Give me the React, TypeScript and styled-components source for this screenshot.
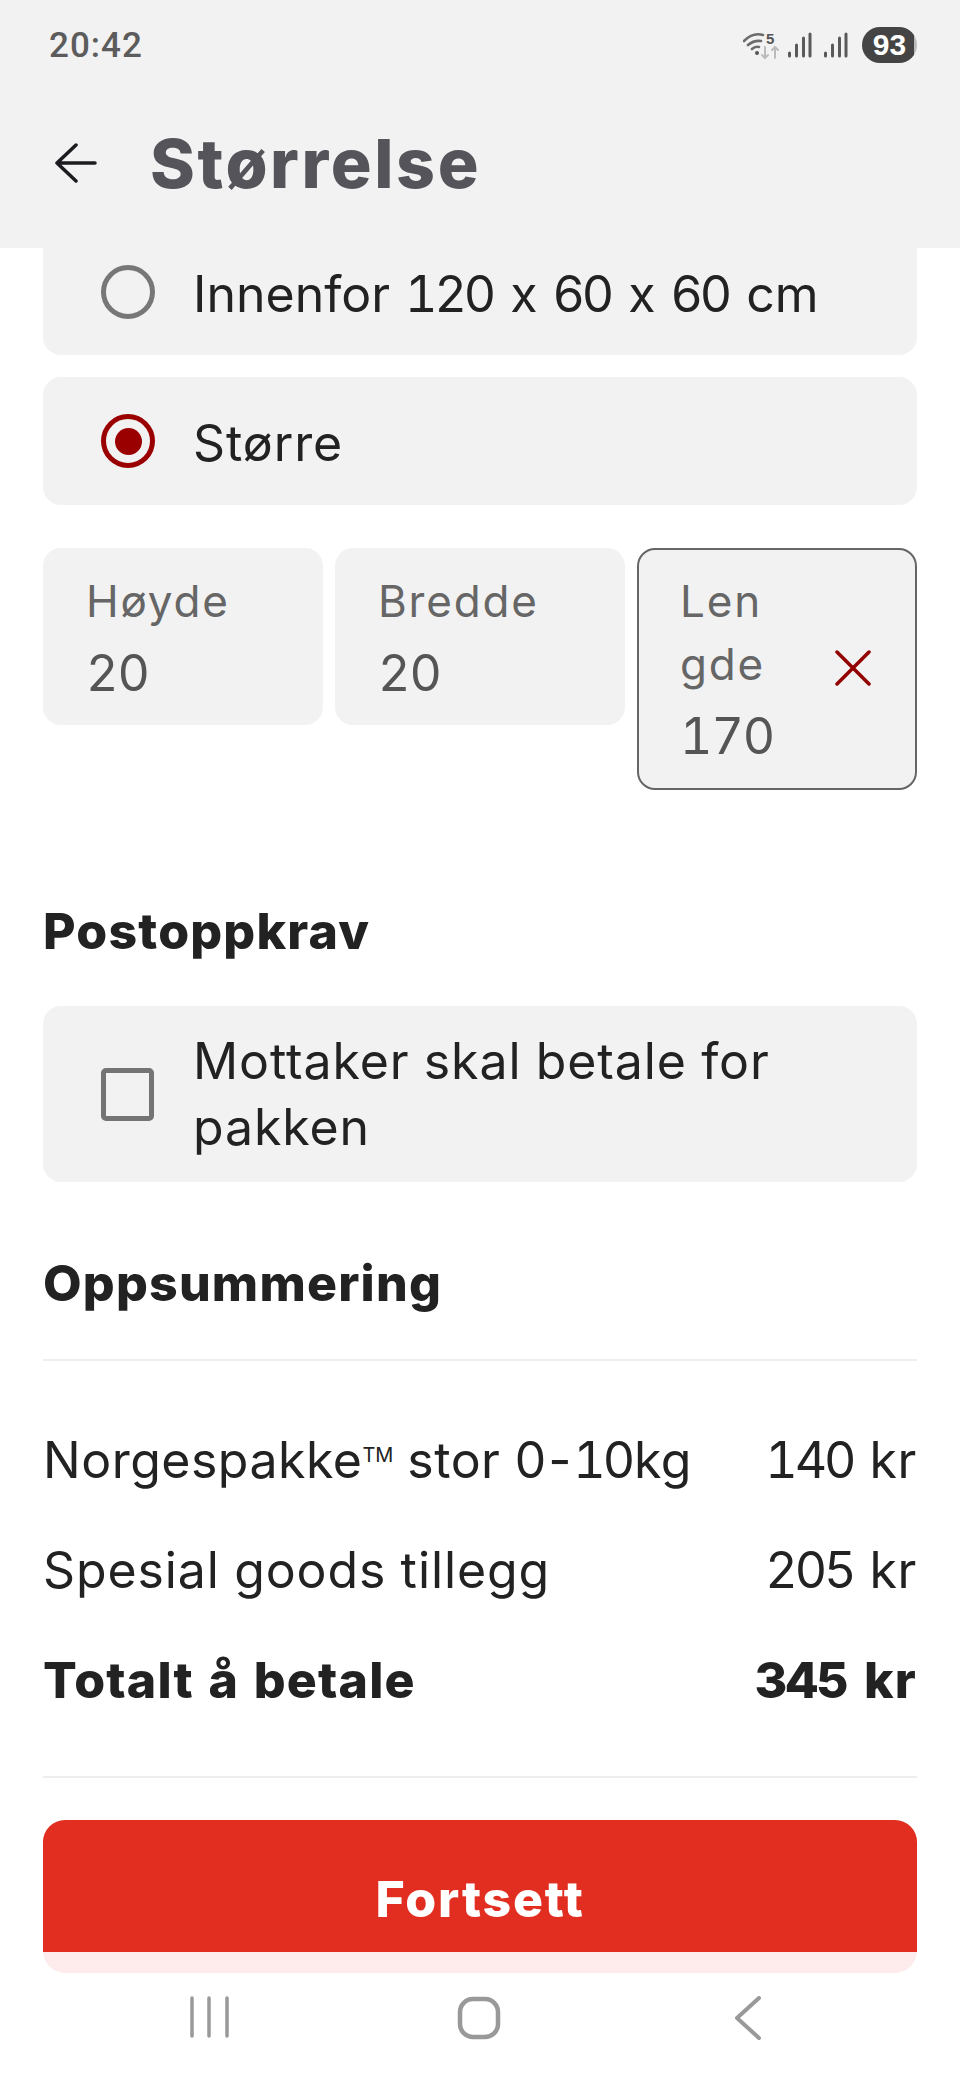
import React from 'react';
import styled, { createGlobalStyle } from 'styled-components';

const GlobalStyle = createGlobalStyle`
  html, body { margin: 0; padding: 0; background: #fff; }
  * { box-sizing: border-box; }
  body {
    font-family: "Inter", "Liberation Sans", sans-serif;
    font-feature-settings: "calt" 0, "tnum" 1;
    color: #222;
  }
`;

const Screen = styled.div`
  width: 960px;
  height: 2080px;
  display: flex;
  flex-direction: column;
  overflow: hidden;
  background: #fff;
`;

const TopArea = styled.header`
  background: #f2f2f2;
  height: 248px;
  flex: none;
  padding: 0 43px 0 49px;
`;

const StatusBar = styled.div`
  height: 90px;
  display: flex;
  align-items: center;
  justify-content: space-between;
`;

const Clock = styled.span`
  font: 500 35px "Roboto", sans-serif;
  letter-spacing: 1px;
  color: #5c5c5c;
`;

const StatusIcons = styled.div`
  display: flex;
  align-items: center;
  gap: 12px;
`;

const WifiIcon = styled.svg`
  margin-right: -3px;
`;

const Battery = styled.span`
  width: 55px;
  height: 36px;
  border-radius: 18px;
  background: linear-gradient(90deg, #444 94%, #bbb 94%);
  color: #fff;
  font: 700 30px "Liberation Sans", sans-serif;
  display: flex;
  align-items: center;
  justify-content: center;
  margin-left: 2px;
`;

const TitleRow = styled.div`
  height: 72px;
  margin-top: 37px;
  display: flex;
  align-items: center;
  gap: 53px;
  padding-left: 6px;
`;

const Title = styled.h1`
  margin: 0;
  font: 800 68px "Inter", sans-serif;
  font-feature-settings: "calt" 0;
  letter-spacing: 2.6px;
  color: #55545a;
`;

const Content = styled.main`
  flex: 1;
  padding: 0 43px;
  display: flex;
  flex-direction: column;
`;

const OptionCard = styled.div<{ $clipped?: boolean; $mt?: number; $h: number }>`
  background: #f2f2f2;
  border-radius: ${(p) => (p.$clipped ? '0 0 18px 18px' : '18px')};
  margin-top: ${(p) => p.$mt ?? 0}px;
  height: ${(p) => p.$h}px;
  padding: 0 32px ${(p) => (p.$clipped ? 20 : 0)}px 58px;
  display: flex;
  align-items: center;
  gap: 38px;
  font-size: 50px;
  line-height: 66px;
  color: #222;
`;

const OptionLabel = styled.span<{ $single?: boolean; $ls?: number; $ws?: number }>`
  padding-top: ${(p) => (p.$single ? 4 : 0)}px;
  letter-spacing: ${(p) => p.$ls ?? 0}px;
  word-spacing: ${(p) => p.$ws ?? 0}px;
`;

// tabular digits keep the footed 1 but run wider than the reference
const Digits = styled.span`
  letter-spacing: -3px;
  margin-right: 2px;
`;

const BoldDigits = styled.span`
  letter-spacing: -1.5px;
  margin-right: 2px;
`;

const RadioCircle = styled.span<{ $on?: boolean }>`
  flex: none;
  width: 54px;
  height: 54px;
  border-radius: 50%;
  border: 5px solid ${(p) => (p.$on ? '#9b0000' : '#777')};
  display: flex;
  align-items: center;
  justify-content: center;
  &::after {
    content: '';
    display: ${(p) => (p.$on ? 'block' : 'none')};
    width: 27px;
    height: 27px;
    border-radius: 50%;
    background: #9b0000;
  }
`;

const CheckBox = styled.span`
  flex: none;
  width: 53px;
  height: 53px;
  border-radius: 5px;
  border: 5px solid #747474;
  margin-right: 1px;
`;

const Dimensions = styled.div`
  display: grid;
  grid-template-columns: 280px 290px 280px;
  gap: 12px;
  align-items: start;
  margin-top: 43px;
`;

const DimField = styled.div<{ $active?: boolean }>`
  background: #f2f2f2;
  border-radius: 18px;
  border: ${(p) => (p.$active ? '2px solid #666' : 'none')};
  padding: ${(p) => (p.$active ? '20px 44px 17px 41px' : '22px 20px 17px 43px')};
  display: flex;
  align-items: center;
  justify-content: space-between;
`;

const DimLabel = styled.div<{ $narrow?: boolean }>`
  font-size: 44px;
  line-height: 63px;
  letter-spacing: 1.8px;
  color: #666;
  max-width: ${(p) => (p.$narrow ? '90px' : 'none')};
  overflow-wrap: anywhere;
`;

const DimValue = styled.div`
  font-size: 50px;
  line-height: 70px;
  letter-spacing: -1px;
  margin-top: 5px;
  color: #555;
`;

const ClearIcon = styled.svg`
  margin-bottom: 5px;
`;

const SectionTitle = styled.h2<{ $mt: number; $mb: number }>`
  margin: ${(p) => p.$mt}px 0 ${(p) => p.$mb}px;
  font-size: 50px;
  line-height: 60px;
  letter-spacing: 1.2px;
  font-weight: 800;
  color: #222;
`;

const Rule = styled.hr<{ $mt: number }>`
  border: 0;
  height: 2px;
  background: #eee;
  margin: ${(p) => p.$mt}px 0 0;
`;

const PriceList = styled.div`
  margin-top: 44px;
`;

const PriceRow = styled.div<{ $bold?: boolean }>`
  display: flex;
  justify-content: space-between;
  height: 110px;
  align-items: center;
  font-size: 50px;
  letter-spacing: ${(p) => (p.$bold ? 1.2 : 0.6)}px;
  font-weight: ${(p) => (p.$bold ? 800 : 400)};
  color: #222;
`;

const PriceLabel = styled.span<{ $ls?: number }>`
  letter-spacing: ${(p) => p.$ls ?? 0.5}px;
`;

const Tm = styled.sup`
  font-size: 20px;
  letter-spacing: 0;
  vertical-align: 16px;
  line-height: 0;
`;

const ContinueButton = styled.div`
  margin-top: 42px;
  height: 153px;
  border-radius: 22px;
  overflow: hidden;
  background: #fdeceb;
  color: #fff;
  font-weight: 800;
  font-size: 50px;
  letter-spacing: 1.8px;
`;

const ContinueFace = styled.div`
  height: 132px;
  padding-top: 25px;
  background: #e22d21;
  display: flex;
  align-items: center;
  justify-content: center;
`;

const NavBar = styled.nav`
  flex: none;
  height: 107px;
  padding: 23px 0 0 75px;
  display: grid;
  grid-template-columns: repeat(3, 269px);
  justify-items: center;
  align-items: start;
`;

const NavIcon = styled.svg`
  fill: none;
  stroke: #999;
  stroke-linecap: round;
  stroke-linejoin: round;
`;

const Wifi = () => (
  <WifiIcon width="36" height="30" viewBox="0 -2 36 30" fill="none" strokeLinecap="round">
    <path d="M1 9Q10 0 20 3M5 13q6-5 13-4M9 17q3-3 7-2" stroke="#6b6b6b" strokeWidth="2.6" />
    <circle cx="14" cy="21" r="2" fill="#555" />
    <text x="23" y="12" fontSize="15" fontWeight="700" fontFamily="Liberation Sans" fill="#555">5</text>
    <path d="M22 15v11M19 23l3 3 3-3" stroke="#bbb" strokeWidth="2" />
    <path d="M32 26V15M29 18l3-3 3 3" stroke="#bbb" strokeWidth="2" />
  </WifiIcon>
);

const Signal = () => (
  <svg width="24" height="26" viewBox="0 0 24 26" fill="none" stroke="#5a5a5a" strokeWidth="3" strokeLinecap="round">
    <path d="M1.5 21v3M8.5 13v11M15.5 6v18M22 2v22" />
  </svg>
);

export default function App() {
  return (
    <Screen>
      <GlobalStyle />
      <TopArea>
        <StatusBar>
          <Clock>20:42</Clock>
          <StatusIcons>
            <Wifi />
            <Signal />
            <Signal />
            <Battery>93</Battery>
          </StatusIcons>
        </StatusBar>
        <TitleRow>
          <svg width="42" height="40" viewBox="0 0 42 40" fill="none" stroke="#1c1c20" strokeWidth="3.5" strokeLinecap="round" strokeLinejoin="round">
            <path d="M21 2 2 20l19 18M2 20h38" />
          </svg>
          <Title>Størrelse</Title>
        </TitleRow>
      </TopArea>
      <Content>
        <OptionCard $clipped $h={107}>
          <RadioCircle />
          <OptionLabel $single $ws={1.5}>
            Innenfor <Digits>120</Digits> x <Digits>60</Digits> x <Digits>60</Digits> cm
          </OptionLabel>
        </OptionCard>
        <OptionCard $mt={22} $h={128}>
          <RadioCircle $on />
          <OptionLabel $single $ls={0.9}>Større</OptionLabel>
        </OptionCard>
        <Dimensions>
          <DimField>
            <div>
              <DimLabel>Høyde</DimLabel>
              <DimValue>20</DimValue>
            </div>
          </DimField>
          <DimField>
            <div>
              <DimLabel>Bredde</DimLabel>
              <DimValue>20</DimValue>
            </div>
          </DimField>
          <DimField $active>
            <div>
              <DimLabel $narrow>Lengde</DimLabel>
              <DimValue>170</DimValue>
            </div>
            <ClearIcon width="36" height="36" viewBox="0 0 36 36" fill="none" stroke="#930000" strokeWidth="3.5" strokeLinecap="round">
              <path d="M2 2l32 32M34 2 2 34" />
            </ClearIcon>
          </DimField>
        </Dimensions>
        <SectionTitle $mt={111} $mb={45}>Postoppkrav</SectionTitle>
        <OptionCard $h={176}>
          <CheckBox />
          <OptionLabel $ls={0.9}>Mottaker skal betale for pakken</OptionLabel>
        </OptionCard>
        <SectionTitle $mt={71} $mb={0}>Oppsummering</SectionTitle>
        <Rule $mt={46} />
        <PriceList>
          <PriceRow>
            <PriceLabel>Norgespakke<Tm>TM</Tm> stor <Digits>0-10</Digits>kg</PriceLabel>
            <span><Digits>140</Digits> kr</span>
          </PriceRow>
          <PriceRow>
            <PriceLabel $ls={0.9}>Spesial goods tillegg</PriceLabel>
            <span><Digits>205</Digits> kr</span>
          </PriceRow>
          <PriceRow $bold>
            <span>Totalt å betale</span>
            <span><BoldDigits>345</BoldDigits> kr</span>
          </PriceRow>
        </PriceList>
        <Rule $mt={41} />
        <ContinueButton>
          <ContinueFace>Fortsett</ContinueFace>
        </ContinueButton>
      </Content>
      <NavBar>
        <NavIcon width="40" height="42" viewBox="0 0 40 42" strokeWidth="3.5">
          <path d="M2 2v38M19 2v38M37 2v38" />
        </NavIcon>
        <NavIcon width="44" height="44" viewBox="0 0 44 44" strokeWidth="4.5">
          <rect x="3" y="3" width="38" height="38" rx="13" />
        </NavIcon>
        <NavIcon width="30" height="44" viewBox="0 0 30 44" strokeWidth="4">
          <path d="M26 2 4 22l22 20" />
        </NavIcon>
      </NavBar>
    </Screen>
  );
}
